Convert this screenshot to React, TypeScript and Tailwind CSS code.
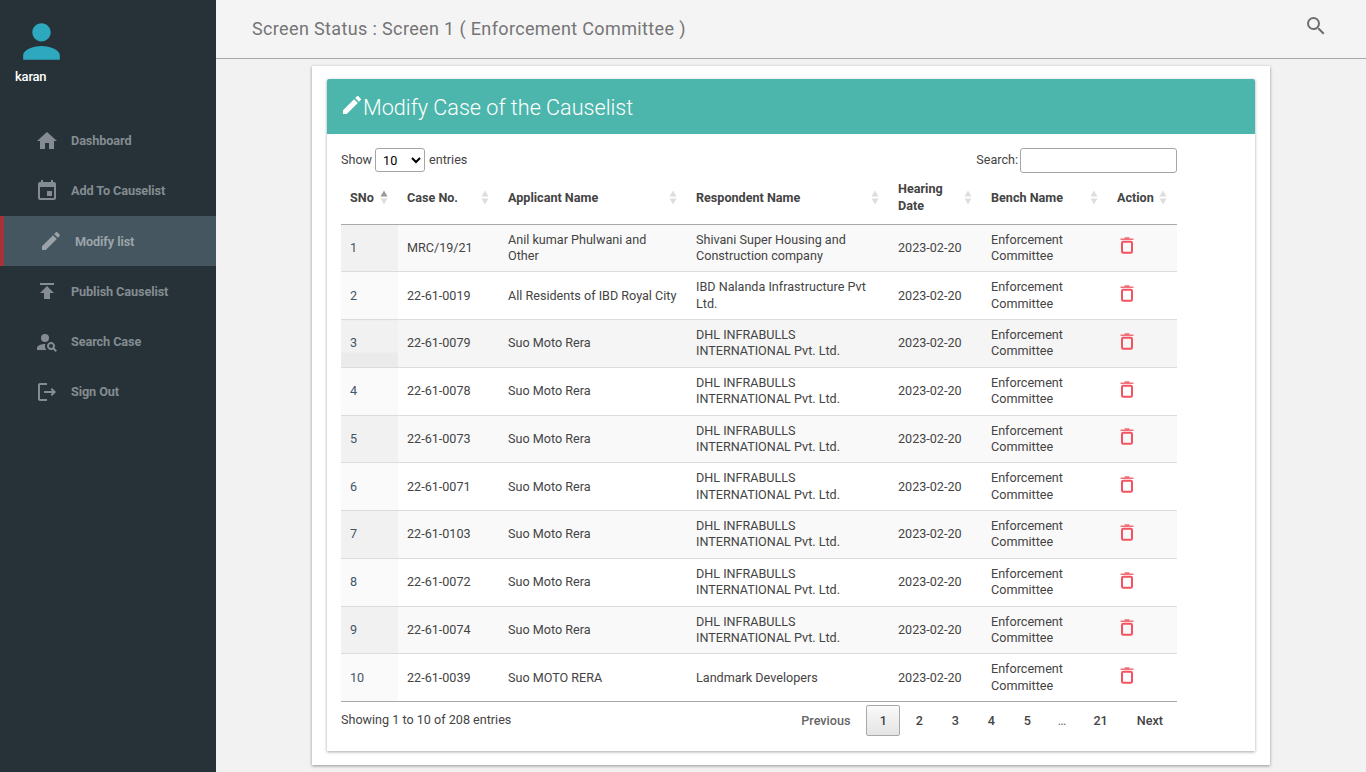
import { MdHome, MdEvent, MdEdit, MdPublish, MdPersonSearch, MdOutlineLogout, MdPerson, MdSearch } from "react-icons/md";

const menu = [
  { label: "Dashboard", icon: MdHome },
  { label: "Add To Causelist", icon: MdEvent },
  { label: "Modify list", icon: MdEdit, active: true },
  { label: "Publish Causelist", icon: MdPublish },
  { label: "Search Case", icon: MdPersonSearch },
  { label: "Sign Out", icon: MdOutlineLogout },
];

const columns = [
  { label: "SNo", width: "w-[57px]", active: true },
  { label: "Case No.", width: "w-[101px]" },
  { label: "Applicant Name", width: "w-[188px]" },
  { label: "Respondent Name", width: "w-[202px]" },
  { label: "Hearing Date", width: "w-[93px]" },
  { label: "Bench Name", width: "w-[126px]" },
  { label: "Action", width: "w-[69px]" },
];

const dhl = "DHL INFRABULLS INTERNATIONAL Pvt. Ltd.";
const rows = [
  ["1", "MRC/19/21", "Anil kumar Phulwani and Other", "Shivani Super Housing and Construction company"],
  ["2", "22-61-0019", "All Residents of IBD Royal City", "IBD Nalanda Infrastructure Pvt Ltd."],
  ["3", "22-61-0079", "Suo Moto Rera", dhl],
  ["4", "22-61-0078", "Suo Moto Rera", dhl],
  ["5", "22-61-0073", "Suo Moto Rera", dhl],
  ["6", "22-61-0071", "Suo Moto Rera", dhl],
  ["7", "22-61-0103", "Suo Moto Rera", dhl],
  ["8", "22-61-0072", "Suo Moto Rera", dhl],
  ["9", "22-61-0074", "Suo Moto Rera", dhl],
  ["10", "22-61-0039", "Suo MOTO RERA", "Landmark Developers"],
];

function SortArrows({ active }: { active?: boolean }) {
  return (
    <svg width="8" height="15" viewBox="0 0 8 15" className="shrink-0">
      <path d="M4 0.5 7.5 6.5H0.5Z" fill={active ? "#9a9a9a" : "#dedede"} />
      <path d="M4 14.5 7.5 8.5H0.5Z" fill="#dedede" />
    </svg>
  );
}

function TrashIcon() {
  return (
    <svg width="16" height="17" viewBox="0 0 16 17" fill="none" className="ml-[2px] -mt-[4px]">
      <path d="M1.5 2.2H14.5M5.5 1H10.5" stroke="#f0707a" strokeWidth="1.5" />
      <rect x="3" y="4.8" width="10" height="10.9" rx="1.2" stroke="#f4525f" strokeWidth="2" />
    </svg>
  );
}

export default function App() {
  return (
    <div className="flex h-screen overflow-hidden bg-[#f2f2f2] font-['Roboto',sans-serif] text-[12.6px] text-[#444]">
      <aside className="w-[216px] shrink-0 bg-[#263238]">
        <div className="h-[115.6px] pl-[15px] pt-[14px]">
          <MdPerson className="ml-[-1px] text-[55px] text-[#2ea8bf]" />
          <div className="mt-[-2px] text-[13px] font-medium tracking-[-0.2px] text-white">karan</div>
        </div>
        <nav>
          {menu.map((item) => {
            const Icon = item.icon;
            return (
              <div
                key={item.label}
                className={
                  item.active
                    ? "flex h-[50.25px] items-center border-l-4 border-[#a4333a] bg-[#455660] pl-[35px] font-bold text-[#9ba3a8]"
                    : "flex h-[50.25px] items-center pl-[35px] font-bold text-[#848c91]"
                }
              >
                <Icon className="mr-[12px] shrink-0 text-[24px]" />
                <span className="text-[12.7px] tracking-[-0.1px]">{item.label}</span>
              </div>
            );
          })}
        </nav>
      </aside>

      <div className="flex min-w-0 flex-1 flex-col">
        <header className="flex h-[59px] shrink-0 items-center justify-between border-b border-[#a8a8a8] bg-[#f4f4f4] pl-[36px] pr-[38px]">
          <h1 className="mb-[2px] text-[18px] tracking-[0.36px] text-[#757575]">Screen Status : Screen 1 ( Enforcement Committee )</h1>
          <MdSearch className="mb-[6px] text-[24px] text-[#6f6f6f]" />
        </header>

        <main className="px-[96px] pt-[7px]">
          <div className="h-[699px] bg-white px-[15px] pt-[13px] shadow-[0_1px_3px_rgba(0,0,0,0.4)]">
            <div className="h-[672px] bg-white shadow-[0_1px_3px_rgba(0,0,0,0.35)]">
              <div className="flex h-[55px] items-center rounded-t-[2px] bg-[#4db6ac] pl-[13px] text-white">
                <MdEdit className="mb-[4px] shrink-0 text-[24px]" />
                <h2 className="ml-[-1px] mt-[4px] text-[21.6px] font-light">Modify Case of the Causelist</h2>
              </div>

              <div className="px-[14px]">
                <div className="flex h-[44px] w-[836px] items-start justify-between pt-[14px]">
                  <label className="flex items-center">
                    Show
                    <select className="ml-[3px] mr-[4px] h-[24px] w-[50px] rounded-[3px] border border-[#a6a6a6] bg-white pl-[3px] text-[12.6px] text-black">
                      <option>10</option>
                    </select>
                    entries
                  </label>
                  <label className="flex items-center">
                    Search:
                    <input className="ml-[2px] h-[25px] w-[157px] rounded-[3px] border border-[#a6a6a6] bg-white" />
                  </label>
                </div>

                <table className="w-[836px] table-fixed border-collapse leading-[16.25px]">
                  <thead>
                    <tr className="h-[46px] border-b border-[#a9a9a9]">
                      {columns.map((col) => (
                        <th key={col.label} className={`${col.width} pb-[7px] pl-[9px] pr-[10px] text-left font-bold leading-[17px] text-[#444]`}>
                          <div className="flex items-center justify-between">
                            <span>{col.label}</span>
                            <SortArrows active={col.active} />
                          </div>
                        </th>
                      ))}
                    </tr>
                  </thead>
                  <tbody>
                    {rows.map((row, i) => {
                      const odd = i % 2 === 0;
                      const third = i === 2;
                      return (
                        <tr key={row[0]} className={`h-[47.75px] border-b ${i === 9 ? "border-[#a9a9a9]" : "border-[#dcdcdc]"} ${third ? "bg-[#f5f5f5]" : odd ? "bg-[#f9f9f9]" : "bg-white"}`}>
                          <td className={`pl-[9px] text-[#456] ${third ? "bg-[linear-gradient(#f1f1f1_32px,#ebebeb_32px)]" : odd ? "bg-[#f1f1f1]" : "bg-[#fafafa]"}`}>{row[0]}</td>
                          <td className="pl-[9px]">{row[1]}</td>
                          <td className="pl-[9px] pr-[8px]">{row[2]}</td>
                          <td className="pl-[9px] pr-[16px]">{row[3]}</td>
                          <td className="pl-[9px]">2023-02-20</td>
                          <td className="pl-[9px] pr-[30px]">Enforcement Committee</td>
                          <td className="pl-[9px]"><TrashIcon /></td>
                        </tr>
                      );
                    })}
                  </tbody>
                </table>

                <div className="flex w-[836px] items-start justify-between pt-[3px]">
                  <span className="pt-[6px]">Showing 1 to 10 of 208 entries</span>
                  <div className="flex items-center font-medium">
                    <span className="mr-[2px] px-[14px] pt-[1px] text-[#666]">Previous</span>
                    <span className="flex h-[31px] w-[34px] items-center justify-center rounded-[2px] border border-[#a9a9a9] bg-[linear-gradient(#fafafa,#e4e4e4)] pt-[1px]">1</span>
                    {["2", "3", "4", "5"].map((n) => (
                      <span key={n} className="ml-[2px] flex h-[31px] w-[34px] items-center justify-center pt-[1px]">{n}</span>
                    ))}
                    <span className="ml-[2px] w-[31px] pt-[1px] text-center font-normal text-[#666]">…</span>
                    <span className="ml-[2px] px-[14px] pt-[1px]">21</span>
                    <span className="ml-[1px] px-[14px] pt-[1px]">Next</span>
                  </div>
                </div>
              </div>
            </div>
          </div>
        </main>
      </div>
    </div>
  );
}
